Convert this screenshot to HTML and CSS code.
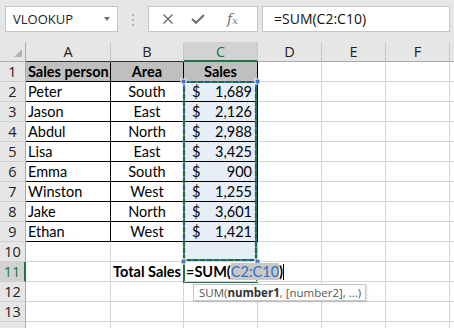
FILE: index.html
```html
<!DOCTYPE html>
<html lang="en">

<head>
    <meta charset="UTF-8">
    <title>Total Sales</title>
    <link rel="stylesheet" href="styles.css">
</head>

<body>
    <div class="toolbar">
        <div class="namebox">VLOOKUP <span class="caret"></span></div>
        <div class="dots"><i></i><i></i><i></i></div>
        <div class="fbtns">
            <svg class="ico" width="12" height="10" viewBox="0 0 12 10"><path d="M1.5 0.5 L10.5 9.5 M10.5 0.5 L1.5 9.5" stroke="#6a6a6a" stroke-width="1.4" fill="none"/></svg>
            <svg class="ico" width="14" height="10" viewBox="0 0 14 10"><path d="M1 5 L5 8.8 L13 1" stroke="#6a6a6a" stroke-width="2" fill="none"/></svg>
            <span class="fx">f<small>x</small></span>
        </div>
        <div class="formula">=SUM(C2:C10)</div>
    </div>

    <div class="sheet">
        <!-- column headers -->
        <div class="corner"><span class="tri"></span></div>
        <div class="ch dark">A</div>
        <div class="ch dark">B</div>
        <div class="ch sel">C</div>
        <div class="ch">D</div>
        <div class="ch">E</div>
        <div class="ch">F</div>
        <div class="ch"></div>

        <div class="rh">1</div>
        <div class="c tb th">Sales person</div>
        <div class="c tb th mid">Area</div>
        <div class="c tb th mid">Sales</div>
        <div class="c"></div><div class="c"></div><div class="c"></div><div class="c"></div>

        <div class="rh">2</div>
        <div class="c tb">Peter</div>
        <div class="c tb mid">South</div>
        <div class="c tb money"><span>$</span><span>1,689</span></div>
        <div class="c"></div><div class="c"></div><div class="c"></div><div class="c"></div>

        <div class="rh">3</div>
        <div class="c tb">Jason</div>
        <div class="c tb mid">East</div>
        <div class="c tb money"><span>$</span><span>2,126</span></div>
        <div class="c"></div><div class="c"></div><div class="c"></div><div class="c"></div>

        <div class="rh">4</div>
        <div class="c tb">Abdul</div>
        <div class="c tb mid">North</div>
        <div class="c tb money"><span>$</span><span>2,988</span></div>
        <div class="c"></div><div class="c"></div><div class="c"></div><div class="c"></div>

        <div class="rh">5</div>
        <div class="c tb">Lisa</div>
        <div class="c tb mid">East</div>
        <div class="c tb money"><span>$</span><span>3,425</span></div>
        <div class="c"></div><div class="c"></div><div class="c"></div><div class="c"></div>

        <div class="rh">6</div>
        <div class="c tb">Emma</div>
        <div class="c tb mid">South</div>
        <div class="c tb money"><span>$</span><span>900</span></div>
        <div class="c"></div><div class="c"></div><div class="c"></div><div class="c"></div>

        <div class="rh">7</div>
        <div class="c tb">Winston</div>
        <div class="c tb mid">West</div>
        <div class="c tb money"><span>$</span><span>1,255</span></div>
        <div class="c"></div><div class="c"></div><div class="c"></div><div class="c"></div>

        <div class="rh">8</div>
        <div class="c tb">Jake</div>
        <div class="c tb mid">North</div>
        <div class="c tb money"><span>$</span><span>3,601</span></div>
        <div class="c"></div><div class="c"></div><div class="c"></div><div class="c"></div>

        <div class="rh">9</div>
        <div class="c tb">Ethan</div>
        <div class="c tb mid">West</div>
        <div class="c tb money"><span>$</span><span>1,421</span></div>
        <div class="c"></div><div class="c"></div><div class="c"></div><div class="c"></div>

        <div class="rh">10</div>
        <div class="c"></div>
        <div class="c"></div>
        <div class="c blue"></div>
        <div class="c"></div><div class="c"></div><div class="c"></div><div class="c"></div>

        <div class="rh act">11</div>
        <div class="c"></div>
        <div class="c right bold">Total Sales</div>
        <div class="c edit">=SUM(<span class="ref">C2:C10</span>)<span class="cursor"></span></div>
        <div class="c"></div><div class="c"></div><div class="c"></div><div class="c"></div>

        <div class="rh">12</div>
        <div class="c"></div><div class="c"></div><div class="c"></div>
        <div class="c"></div><div class="c"></div><div class="c"></div><div class="c"></div>

        <div class="rh">13</div>
        <div class="c"></div><div class="c"></div><div class="c"></div>
        <div class="c"></div><div class="c"></div><div class="c"></div><div class="c"></div>

        <div class="rh"></div>
        <div class="c"></div><div class="c"></div><div class="c"></div>
        <div class="c"></div><div class="c"></div><div class="c"></div><div class="c"></div>
    </div>

    <!-- selection marks drawn over the grid -->
    <svg class="marks" width="454" height="328">
        <rect x="184" y="82" width="72" height="178" fill="none" stroke="#4472c4" stroke-width="2"/>
        <rect x="184" y="82" width="72" height="178" fill="none" stroke="#1e6b40" stroke-width="2.2" stroke-dasharray="5 2"/>
        <path d="M184 262 V282 H257 V262" fill="none" stroke="#217346" stroke-width="2"/>
        <rect x="181" y="79" width="5" height="5" fill="#4472c4" stroke="#fff" stroke-width="1"/>
        <rect x="255" y="79" width="5" height="5" fill="#4472c4" stroke="#fff" stroke-width="1"/>
        <rect x="181" y="259" width="5" height="5" fill="#4472c4" stroke="#fff" stroke-width="1"/>
        <rect x="255" y="259" width="5" height="5" fill="#4472c4" stroke="#fff" stroke-width="1"/>
    </svg>

    <div class="tip">SUM(<b>number1</b>, [number2], ...)</div>
</body>

</html>
```

FILE: styles.css
```css
* {
    box-sizing: border-box;
}

body {
    margin: 0;
    width: 454px;
    height: 328px;
    overflow: hidden;
    position: relative;
    background: #fff;
    font-family: Lato, "Liberation Sans", sans-serif;
    color: #000;
}

/* formula bar */
.toolbar {
    height: 42px;
    background: #e6e6e6;
    display: flex;
    align-items: flex-start;
    padding: 6px 0 0 5px;
}

.namebox {
    width: 113px;
    height: 26px;
    background: #fff;
    border: 1px solid #c6c6c6;
    display: flex;
    align-items: center;
    justify-content: space-between;
    padding: 0 7px 0 7px;
    font-family: "Open Sans", sans-serif;
    font-size: 13px;
    color: #222;
}

.caret {
    border-left: 3px solid transparent;
    border-right: 3px solid transparent;
    border-top: 4px solid #707070;
}

.dots {
    width: 30px;
    height: 26px;
    display: flex;
    flex-direction: column;
    align-items: center;
    gap: 3px;
    padding-top: 8px;
}

.dots i {
    width: 2px;
    height: 2px;
    background: #b0b0b0;
}

.fbtns {
    width: 110px;
    height: 26px;
    background: #fff;
    border: 1px solid #c6c6c6;
    display: flex;
    align-items: center;
    padding-left: 13px;
}

.fbtns .ico {
    margin-right: 17px;
}

.fx {
    font-family: "DejaVu Serif", serif;
    font-style: italic;
    font-size: 14px;
    color: #707070;
    margin-left: 5px;
}

.fx small {
    font-size: 10px;
}

.formula {
    width: 188px;
    height: 26px;
    margin-left: 4px;
    background: #fff;
    border: 1px solid #c6c6c6;
    padding-left: 11px;
    line-height: 24px;
    font-family: "Open Sans", sans-serif;
    font-size: 14px;
    color: #111;
}

/* grid */
.sheet {
    display: grid;
    grid-template-columns: 26px 85px 73px 74px 64px 64px 64px 20px;
    grid-auto-rows: 20px;
}

.sheet > div {
    border-right: 1px solid #d4d4d4;
    border-bottom: 1px solid #d4d4d4;
    line-height: 20px;
    font-size: 14.5px;
    white-space: nowrap;
    overflow: hidden;
}

.corner {
    background: #e6e6e6;
    position: relative;
    border-right-color: #ababab !important;
    border-bottom-color: #ababab !important;
}

.tri {
    position: absolute;
    right: 3px;
    bottom: 4px;
    border-left: 8px solid transparent;
    border-bottom: 8px solid #b4b4b4;
}

.ch {
    background: #e6e6e6;
    text-align: center;
    font-family: "Open Sans", sans-serif;
    font-size: 13px;
    color: #222;
    border-right-color: #c8c8c8 !important;
    border-bottom-color: #ababab !important;
}

.ch.dark {
    border-bottom-color: #333 !important;
}

.ch.sel {
    background: #d2d2d2;
    color: #217346;
    border-bottom: 2px solid #217346 !important;
}

.rh {
    background: #e6e6e6;
    text-align: center;
    font-family: "Open Sans", sans-serif;
    font-size: 13px;
    color: #222;
    border-right-color: #ababab !important;
    border-bottom-color: #cfcfcf !important;
}

.rh.act {
    background: #d2d2d2;
    color: #217346;
    border-right: 2px solid #217346 !important;
}

.c {
    padding: 0 2px;
}

.tb {
    border-right-color: #000 !important;
    border-bottom-color: #000 !important;
}

.th {
    background: #bfbfbf;
    font-weight: bold;
}

.mid {
    text-align: center;
}

.right {
    text-align: right;
}

.bold {
    font-weight: bold;
}

.money {
    display: flex;
    justify-content: space-between;
    padding: 0 5px 0 8px;
    background: #e8eef7;
}

.blue {
    background: #e8eef7;
}

.sheet > .edit {
    overflow: visible;
    position: relative;
    z-index: 1;
    font-weight: bold;
}

.ref {
    font-weight: normal;
    color: #2f6fbf;
    background: #c8c8c8;
}

.cursor {
    display: inline-block;
    width: 1px;
    height: 16px;
    background: #000;
    vertical-align: -3px;
}

.marks {
    position: absolute;
    top: 0;
    left: 0;
    pointer-events: none;
}

.tip {
    position: absolute;
    left: 193px;
    top: 284px;
    width: 173px;
    height: 17px;
    background: #fff;
    border: 1px solid #c6c6c6;
    box-shadow: 1px 1px 2px rgba(0, 0, 0, 0.15);
    padding-left: 5px;
    line-height: 15px;
    font-family: "Open Sans", sans-serif;
    font-size: 11.5px;
    color: #555;
}

.tip b {
    color: #333;
}
```
